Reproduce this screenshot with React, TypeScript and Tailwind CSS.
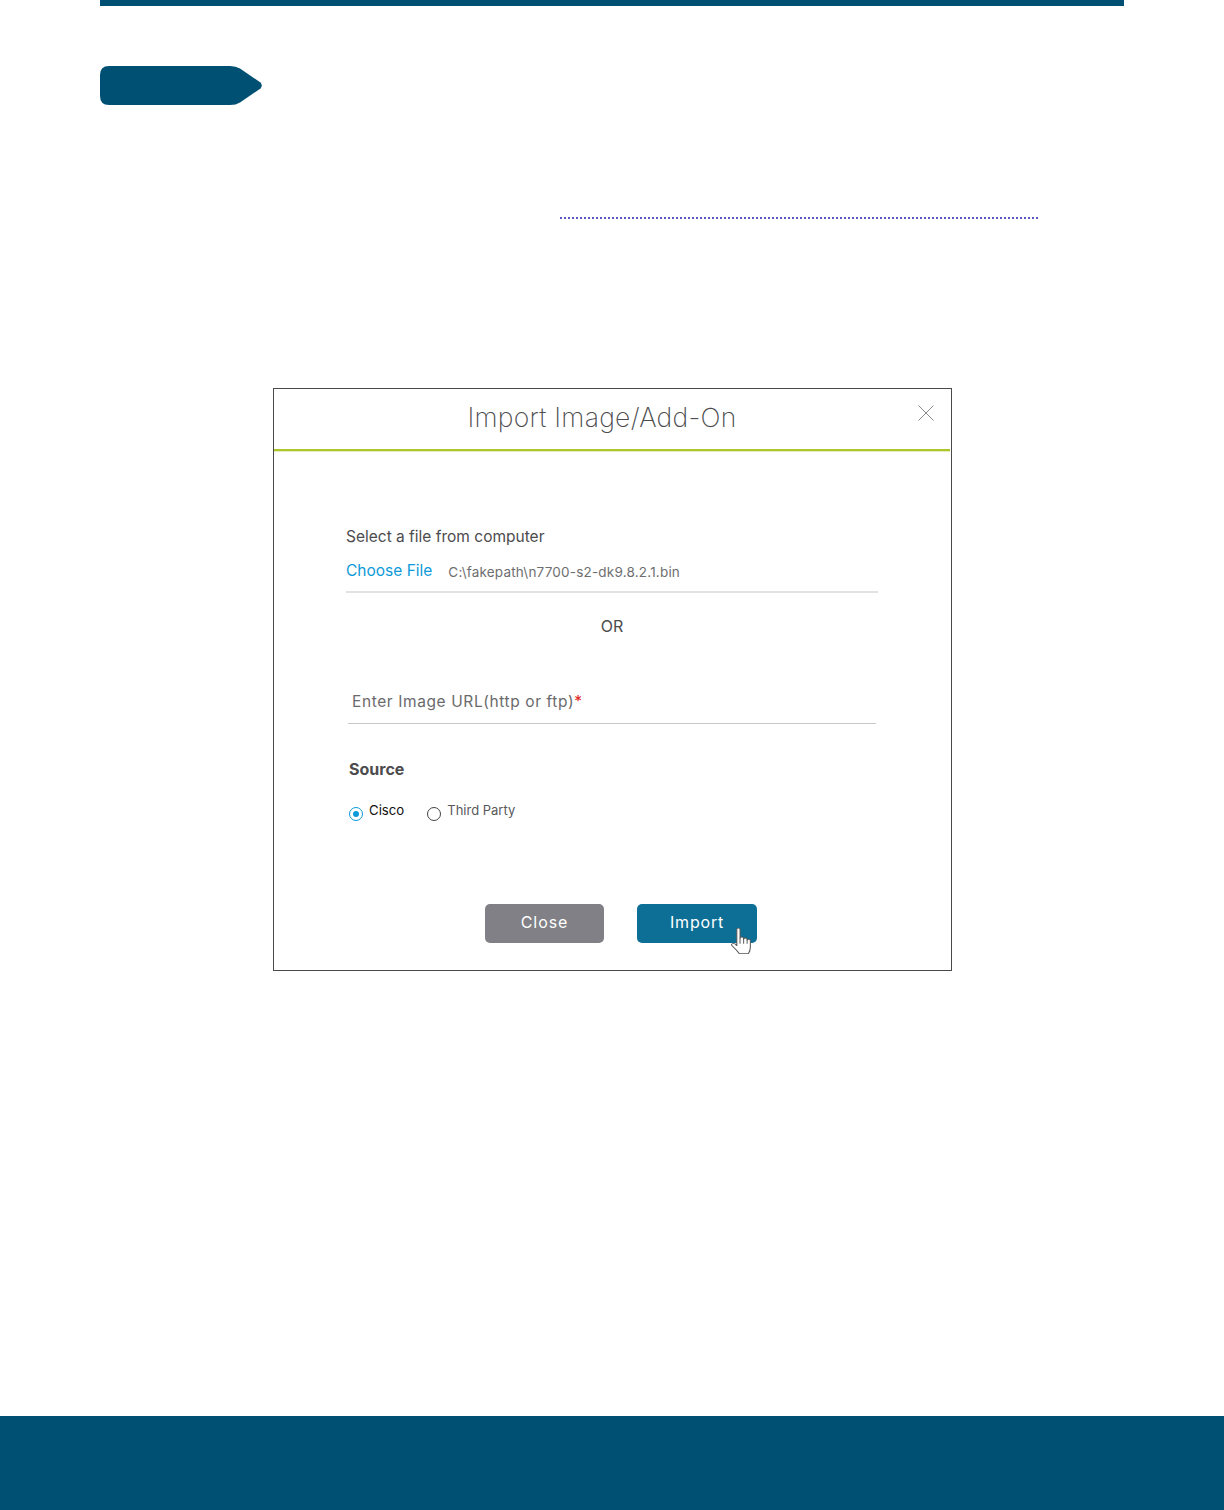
const sans = { fontFamily: "Inter, 'Liberation Sans', sans-serif" };

function Tag() {
  return (
    <svg width="162" height="39" viewBox="0 0 162 39" className="block">
      <path
        d="M9 0H130Q136 0 140 2.5L160.5 16.5Q163 19.5 160.5 22.5L140 36.5Q136 39 130 39H9Q0 39 0 30V9Q0 0 9 0Z"
        fill="#005073"
      />
    </svg>
  );
}

function Cursor() {
  return (
    <svg
      width="20"
      height="27"
      viewBox="0 0 15.5 25.8"
      preserveAspectRatio="none"
      className="absolute left-[94px] top-[23px]"
    >
      <path
        d="M4.5 2.2C4.5 .6 7 .6 7 2.2V10.5C7.2 9.2 9.6 9.2 9.8 10.6V11.4C10 10.2 12.3 10.2 12.5 11.6V12.4C12.8 11.4 15 11.6 15 13V19C15 22 14.5 23.5 13.5 25.5H6.5C5 23 3 20.5 .8 18C-.2 16.5 1.5 15 3 16L4.5 17.8Z"
        fill="#fff"
        stroke="#555"
        strokeWidth="0.8"
        strokeLinejoin="round"
      />
      <path d="M7 10.5V16M9.8 11V16M12.5 12V16" stroke="#333" strokeWidth="0.7" fill="none" />
    </svg>
  );
}

export default function App() {
  return (
    <div className="relative flex h-[1510px] w-[1224px] flex-col bg-white" style={sans}>
      <div className="mx-[100px] h-[6px] shrink-0 bg-[#005073]" />
      <div className="ml-[100px] mt-[60px]">
        <Tag />
      </div>
      <div className="ml-[560px] mt-[112px] h-[2px] w-[478px] border-t-2 border-dotted border-[#5a5abc]" />

      <div className="ml-[273px] mt-[169px] flex h-[583px] w-[679px] shrink-0 flex-col overflow-hidden border border-[#4a4a4a] bg-white">
        <div className="relative flex h-[60px] shrink-0 items-center justify-center pb-[4px] pr-[21px]">
          <h1 className="text-[26.5px] font-extralight leading-none tracking-[0.26px] text-[#4c4c4e]">Import Image/Add-On</h1>
          <svg width="16" height="16" viewBox="0 0 16 16" className="absolute right-[17px] top-[16px]">
            <path d="M.5 .5L15.5 15.5M15.5 .5L.5 15.5" stroke="#8a8a8d" strokeWidth="1" fill="none" />
          </svg>
        </div>
        <div className="mr-px h-[3px] shrink-0 border-b border-[#e4edb8] bg-[#abc72c]" />

        <div className="flex flex-1 flex-col px-[72px]">
          <div className="mt-[75px] h-[20px] text-[15.5px] leading-[20px] text-[#4c4c4e]">Select a file from computer</div>
          <div className="mt-[13px] flex h-[22px] w-[532px] items-center">
            <span className="text-[15.5px] leading-[22px] text-[#0d9ad8]">Choose File</span>
            <span className="ml-[16px] mt-[2px] text-[13.5px] leading-[18px] tracking-[0.2px] text-[#6e6e70]">C:\fakepath\n7700-s2-dk9.8.2.1.bin</span>
          </div>
          <div className="mt-[9px] h-[2px] w-[532px] shrink-0 bg-[#e2e2e2]" />
          <div className="mt-[23px] w-[532px] text-center text-[16px] leading-[20px] text-[#4c4c4e]">OR</div>

          <div className="ml-[2px] mt-[55px] flex h-[22px] w-[528px] items-center pl-[4px] text-[15.5px] tracking-[0.6px] text-[#6a6a6c]">
            Enter Image URL(http or ftp)<span className="text-[#e2231a]">*</span>
          </div>
          <div className="ml-[2px] mt-[10px] h-px w-[528px] shrink-0 bg-[#c8c8c8]" />

          <div className="ml-[3px] mt-[35px] h-[20px] text-[16px] font-bold leading-[20px] text-[#4c4c4e]">Source</div>

          <div className="ml-[3px] mt-[21px] flex h-[20px] items-start">
            <span className="mt-[7px] flex h-[14px] w-[14px] items-center justify-center rounded-full border border-[#0d9ad8]">
              <span className="h-[6px] w-[6px] rounded-full bg-[#0d9ad8]" />
            </span>
            <span className="ml-[6px] text-[13.2px] leading-[20px] text-[#111]">Cisco</span>
            <span className="ml-[23px] mt-[7px] h-[14px] w-[14px] rounded-full border border-[#444]" />
            <span className="ml-[6px] text-[13px] leading-[20px] text-[#58585b]">Third Party</span>
          </div>

          <div className="ml-[139px] mt-[84px] flex gap-[33px]">
            <button className="h-[39px] w-[119px] rounded-[5px] bg-[#808086] pb-[3px] text-[16px] tracking-[0.9px] text-white">Close</button>
            <div className="relative">
              <button className="h-[39px] w-[120px] rounded-[5px] bg-[#0d6f96] pb-[3px] text-[16px] tracking-[0.8px] text-white">Import</button>
              <Cursor />
            </div>
          </div>
        </div>
      </div>

      <div className="mt-auto h-[94px] shrink-0 bg-[#005073]" />
    </div>
  );
}
